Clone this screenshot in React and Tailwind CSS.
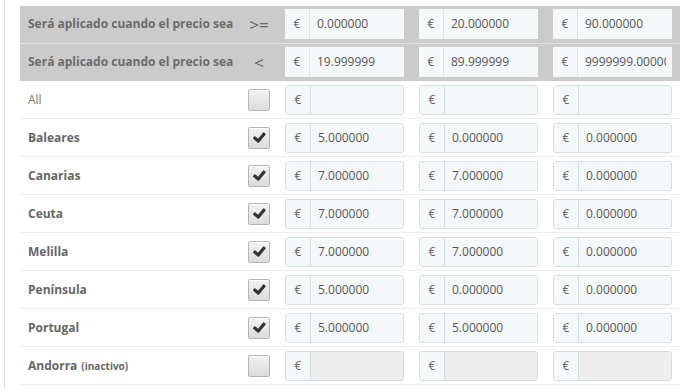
import React from "react";

const Check = () => (
  <svg width="15" height="15" viewBox="0 0 1792 1792" className="block">
    <path
      d="M1671 566q0 40-28 68l-724 724-136 136q-28 28-68 28t-68-28l-136-136-362-362q-28-28-28-68t28-68l136-136q28-28 68-28t68 28l294 295 656-657q28-28 68-28t68 28l136 136q28 28 28 68z"
      fill="#333"
      transform="rotate(-6 896 896)"
    />
  </svg>
);

const Checkbox = ({ checked }) => (
  <div className="w-[22px] h-[22px] rounded-[2px] border border-[#b5b5b5] bg-gradient-to-b from-[#f2f2f2] to-[#dcdcdc] flex items-center justify-center shadow-[inset_0_1px_0_#fff]">
    {checked && <Check />}
  </div>
);

const Money = ({ value, disabled }) => (
  <div className="flex h-[30px] w-[119px] rounded-[3px] border border-[#d3dde1] overflow-hidden">
    <div className="w-[25px] shrink-0 flex items-center justify-center bg-[#f5f8f9] border-r border-[#d3dde1] text-[12px] text-[#666]">€</div>
    <div className={`flex-1 flex items-center pl-[7px] pr-1 text-[12px] text-[#555] whitespace-nowrap overflow-hidden ${disabled ? "bg-[#eeeeee]" : "bg-[#f5f8f9]"}`}>
      {value}
    </div>
  </div>
);

const HeaderMoney = ({ value }) => (
  <div className="flex h-[30px] w-[119px] overflow-hidden">
    <div className="w-[25px] shrink-0 flex items-center justify-center bg-[#f5f8f9] border-r border-[#dfe5e7] text-[12px] text-[#666]">€</div>
    <div className="flex-1 flex items-center pl-[7px] pr-[6px] bg-[#f5f8f9] min-w-0">
      <div className="overflow-hidden whitespace-nowrap text-[12px] text-[#555]">{value}</div>
    </div>
  </div>
);

const rows = [
  { name: "All", bold: false, checked: false, values: ["", "", ""] },
  { name: "Baleares", bold: true, checked: true, values: ["5.000000", "0.000000", "0.000000"] },
  { name: "Canarias", bold: true, checked: true, values: ["7.000000", "7.000000", "0.000000"] },
  { name: "Ceuta", bold: true, checked: true, values: ["7.000000", "7.000000", "0.000000"] },
  { name: "Melilla", bold: true, checked: true, values: ["7.000000", "7.000000", "0.000000"] },
  { name: "Península", bold: true, checked: true, values: ["5.000000", "0.000000", "0.000000"] },
  { name: "Portugal", bold: true, checked: true, values: ["5.000000", "5.000000", "0.000000"] },
  { name: "Andorra", bold: true, checked: false, inactive: true, values: ["", "", ""] },
];

export default function App() {
  return (
    <div className="w-[697px] h-[389px] bg-white overflow-hidden" style={{ fontFamily: '"Open Sans", sans-serif' }}>
      <div className="ml-[4px] h-full border-l border-[#dddddd] pl-[15px] pt-[6px]">
        <div className="w-[660px]">
          {[
            { op: ">=", vals: ["0.000000", "20.000000", "90.000000"] },
            { op: "<", vals: ["19.999999", "89.999999", "9999999.000000"] },
          ].map((h, i) => (
            <div key={i} className={`flex h-[37.5px] items-center bg-[#cbcbcb] ${i === 0 ? "border-b border-[#e2e2e2]" : ""}`}>
              <div className="w-[220px] pl-[8px] text-[12px] font-bold text-[#6b6b6b] whitespace-nowrap">Será aplicado cuando el precio sea</div>
              <div className="w-[38px] flex justify-center text-[17px] text-[#666] leading-none">{h.op}</div>
              {h.vals.map((v, j) => (
                <div key={j} className="w-[134px] pl-[7px]">
                  <HeaderMoney value={v} />
                </div>
              ))}
            </div>
          ))}
          {rows.map((r, i) => (
            <div key={i} className="flex h-[38px] items-center border-b border-[#eeeeee]">
              <div className={`w-[220px] pl-[8px] text-[12px] ${r.bold ? "font-bold text-[#666]" : "text-[#777]"}`}>
                {r.name}
                {r.inactive && <span className="text-[10px] font-bold ml-[4px]">(inactivo)</span>}
              </div>
              <div className="w-[38px] flex justify-center">
                <Checkbox checked={r.checked} />
              </div>
              {r.values.map((v, j) => (
                <div key={j} className="w-[134px] pl-[7px]">
                  <Money value={v} disabled={r.inactive} />
                </div>
              ))}
            </div>
          ))}
        </div>
      </div>
    </div>
  );
}
